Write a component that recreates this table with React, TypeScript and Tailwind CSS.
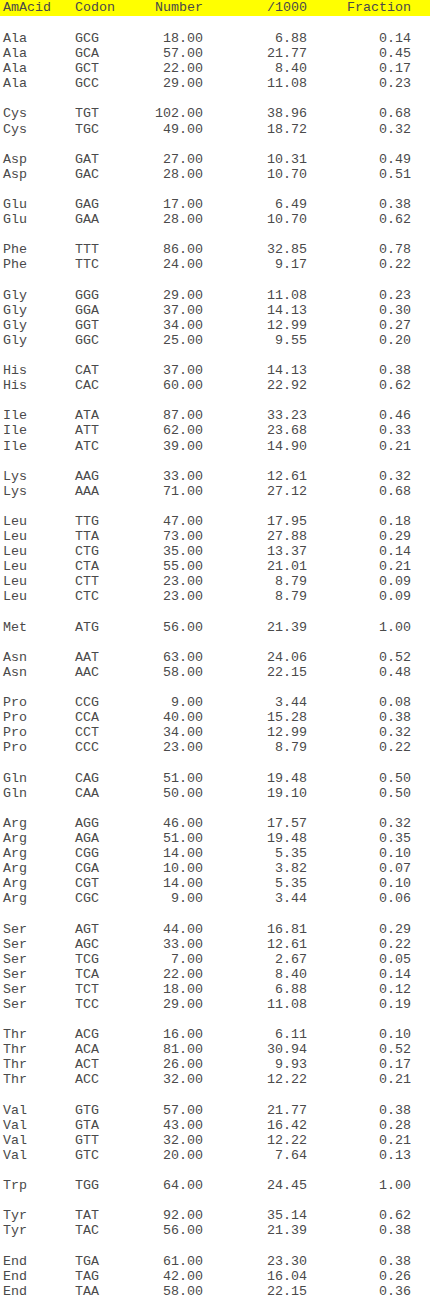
import React from 'react';

type Row = [string, string, string, string, string];

const groups: Row[][] = [
  [
    ['Ala', 'GCG', '18.00', '6.88', '0.14'],
    ['Ala', 'GCA', '57.00', '21.77', '0.45'],
    ['Ala', 'GCT', '22.00', '8.40', '0.17'],
    ['Ala', 'GCC', '29.00', '11.08', '0.23'],
  ],
  [
    ['Cys', 'TGT', '102.00', '38.96', '0.68'],
    ['Cys', 'TGC', '49.00', '18.72', '0.32'],
  ],
  [
    ['Asp', 'GAT', '27.00', '10.31', '0.49'],
    ['Asp', 'GAC', '28.00', '10.70', '0.51'],
  ],
  [
    ['Glu', 'GAG', '17.00', '6.49', '0.38'],
    ['Glu', 'GAA', '28.00', '10.70', '0.62'],
  ],
  [
    ['Phe', 'TTT', '86.00', '32.85', '0.78'],
    ['Phe', 'TTC', '24.00', '9.17', '0.22'],
  ],
  [
    ['Gly', 'GGG', '29.00', '11.08', '0.23'],
    ['Gly', 'GGA', '37.00', '14.13', '0.30'],
    ['Gly', 'GGT', '34.00', '12.99', '0.27'],
    ['Gly', 'GGC', '25.00', '9.55', '0.20'],
  ],
  [
    ['His', 'CAT', '37.00', '14.13', '0.38'],
    ['His', 'CAC', '60.00', '22.92', '0.62'],
  ],
  [
    ['Ile', 'ATA', '87.00', '33.23', '0.46'],
    ['Ile', 'ATT', '62.00', '23.68', '0.33'],
    ['Ile', 'ATC', '39.00', '14.90', '0.21'],
  ],
  [
    ['Lys', 'AAG', '33.00', '12.61', '0.32'],
    ['Lys', 'AAA', '71.00', '27.12', '0.68'],
  ],
  [
    ['Leu', 'TTG', '47.00', '17.95', '0.18'],
    ['Leu', 'TTA', '73.00', '27.88', '0.29'],
    ['Leu', 'CTG', '35.00', '13.37', '0.14'],
    ['Leu', 'CTA', '55.00', '21.01', '0.21'],
    ['Leu', 'CTT', '23.00', '8.79', '0.09'],
    ['Leu', 'CTC', '23.00', '8.79', '0.09'],
  ],
  [['Met', 'ATG', '56.00', '21.39', '1.00']],
  [
    ['Asn', 'AAT', '63.00', '24.06', '0.52'],
    ['Asn', 'AAC', '58.00', '22.15', '0.48'],
  ],
  [
    ['Pro', 'CCG', '9.00', '3.44', '0.08'],
    ['Pro', 'CCA', '40.00', '15.28', '0.38'],
    ['Pro', 'CCT', '34.00', '12.99', '0.32'],
    ['Pro', 'CCC', '23.00', '8.79', '0.22'],
  ],
  [
    ['Gln', 'CAG', '51.00', '19.48', '0.50'],
    ['Gln', 'CAA', '50.00', '19.10', '0.50'],
  ],
  [
    ['Arg', 'AGG', '46.00', '17.57', '0.32'],
    ['Arg', 'AGA', '51.00', '19.48', '0.35'],
    ['Arg', 'CGG', '14.00', '5.35', '0.10'],
    ['Arg', 'CGA', '10.00', '3.82', '0.07'],
    ['Arg', 'CGT', '14.00', '5.35', '0.10'],
    ['Arg', 'CGC', '9.00', '3.44', '0.06'],
  ],
  [
    ['Ser', 'AGT', '44.00', '16.81', '0.29'],
    ['Ser', 'AGC', '33.00', '12.61', '0.22'],
    ['Ser', 'TCG', '7.00', '2.67', '0.05'],
    ['Ser', 'TCA', '22.00', '8.40', '0.14'],
    ['Ser', 'TCT', '18.00', '6.88', '0.12'],
    ['Ser', 'TCC', '29.00', '11.08', '0.19'],
  ],
  [
    ['Thr', 'ACG', '16.00', '6.11', '0.10'],
    ['Thr', 'ACA', '81.00', '30.94', '0.52'],
    ['Thr', 'ACT', '26.00', '9.93', '0.17'],
    ['Thr', 'ACC', '32.00', '12.22', '0.21'],
  ],
  [
    ['Val', 'GTG', '57.00', '21.77', '0.38'],
    ['Val', 'GTA', '43.00', '16.42', '0.28'],
    ['Val', 'GTT', '32.00', '12.22', '0.21'],
    ['Val', 'GTC', '20.00', '7.64', '0.13'],
  ],
  [['Trp', 'TGG', '64.00', '24.45', '1.00']],
  [
    ['Tyr', 'TAT', '92.00', '35.14', '0.62'],
    ['Tyr', 'TAC', '56.00', '21.39', '0.38'],
  ],
  [
    ['End', 'TGA', '61.00', '23.30', '0.38'],
    ['End', 'TAG', '42.00', '16.04', '0.26'],
    ['End', 'TAA', '58.00', '22.15', '0.36'],
  ],
];

const Line: React.FC<{ cells: Row }> = ({ cells }) => (
  <div className="flex h-[15.1px] whitespace-pre">
    <span className="w-[72px]">{cells[0]}</span>
    <span className="w-[48px]">{cells[1]}</span>
    <span className="w-[80px] text-right">{cells[2]}</span>
    <span className="w-[104px] text-right">{cells[3]}</span>
    <span className="w-[104px] text-right">{cells[4]}</span>
  </div>
);

export default function App() {
  return (
    <div className="min-h-screen bg-white font-['Courier_New','Liberation_Mono',monospace] text-[13.333px] leading-[15.1px] text-[#4a4a4a]">
      <div className="w-[430px] bg-[#ffff00] pl-[3px] h-[16px]">
        <Line cells={['AmAcid', 'Codon', 'Number', '/1000', 'Fraction']} />
      </div>
      <div className="pl-[3px] pt-[15px]">
        {groups.map((g, i) => (
          <div key={i} className={i > 0 ? 'pt-[15.1px]' : ''}>
            {g.map((r, j) => (
              <Line key={j} cells={r} />
            ))}
          </div>
        ))}
      </div>
    </div>
  );
}
